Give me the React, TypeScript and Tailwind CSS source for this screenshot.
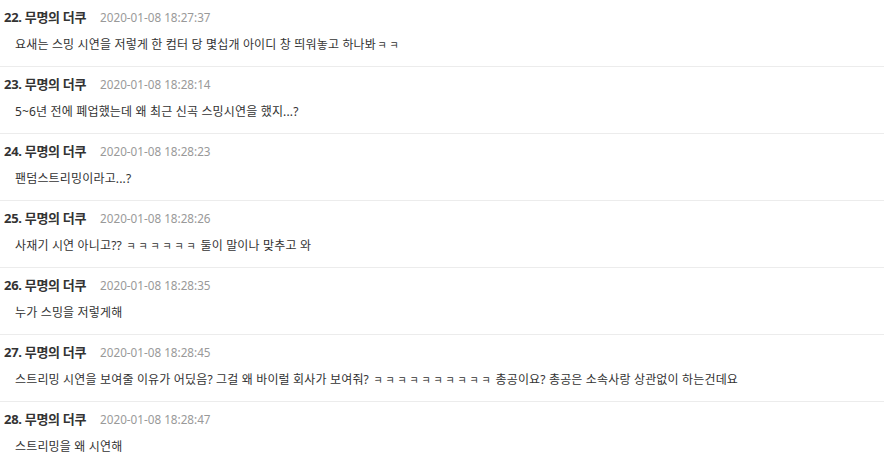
import React from "react";

type Comment = {
  no: number;
  name: string;
  date: string;
  text: string;
};

const comments: Comment[] = [
  { no: 22, name: "무명의 더쿠", date: "2020-01-08 18:27:37", text: "요새는 스밍 시연을 저렇게 한 컴터 당 몇십개 아이디 창 띄워놓고 하나봐ㅋㅋ" },
  { no: 23, name: "무명의 더쿠", date: "2020-01-08 18:28:14", text: "5~6년 전에 폐업했는데 왜 최근 신곡 스밍시연을 했지...?" },
  { no: 24, name: "무명의 더쿠", date: "2020-01-08 18:28:23", text: "팬덤스트리밍이라고...?" },
  { no: 25, name: "무명의 더쿠", date: "2020-01-08 18:28:26", text: "사재기 시연 아니고?? ㅋㅋㅋㅋㅋㅋ 둘이 말이나 맞추고 와" },
  { no: 26, name: "무명의 더쿠", date: "2020-01-08 18:28:35", text: "누가 스밍을 저렇게해" },
  { no: 27, name: "무명의 더쿠", date: "2020-01-08 18:28:45", text: "스트리밍 시연을 보여줄 이유가 어딨음? 그걸 왜 바이럴 회사가 보여줘? ㅋㅋㅋㅋㅋㅋㅋㅋㅋㅋ 총공이요? 총공은 소속사랑 상관없이 하는건데요" },
  { no: 28, name: "무명의 더쿠", date: "2020-01-08 18:28:47", text: "스트리밍을 왜 시연해" },
];

// ㅋ is drawn small inside a full-width cell, like the original font does
const Body = ({ text }: { text: string }) => (
  <>
    {Array.from(text).map((ch, i) =>
      ch === "ㅋ" ? (
        <span key={i} className="inline-block w-[12px] text-center text-[10px] tracking-normal">
          ㅋ
        </span>
      ) : (
        <React.Fragment key={i}>{ch}</React.Fragment>
      ),
    )}
  </>
);

const Row = ({ c, last }: { c: Comment; last: boolean }) => (
  <div className={last ? "h-[67px] pt-[9px]" : "h-[67px] pt-[9px] border-b border-[#ececec]"}>
    <div className="flex items-center h-[18px] pl-1">
      <span className="text-[13px] font-bold text-[#333] tracking-[-0.3px]">
        {c.no}. {c.name}
      </span>
      <span className="ml-[14px] text-[11.7px] text-[#999]">{c.date}</span>
    </div>
    <p className="mt-[9px] pl-[15px] text-[12px] leading-[18px] text-[#333] tracking-[0.15px]">
      <Body text={c.text} />
    </p>
  </div>
);

export default function App() {
  return (
    <div
      className="w-[884px] h-[465px] bg-white overflow-hidden"
      style={{ fontFamily: '"Noto Sans", "Noto Sans CJK KR", sans-serif' }}
    >
      {comments.map((c, i) => (
        <Row key={c.no} c={c} last={i === comments.length - 1} />
      ))}
    </div>
  );
}
